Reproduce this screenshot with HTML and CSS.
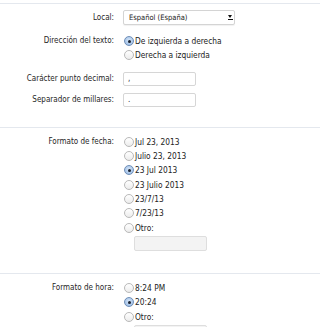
FILE: index.html
```html
<!DOCTYPE html>
<html lang="es">
<head>
<meta charset="utf-8">
<link rel="stylesheet" href="styles.css">
</head>
<body>
<div class="page">
  <section class="section first">
    <div class="row row-local">
      <div class="label">Local:</div>
      <div class="control">
        <div class="select">
          <span>Español (España)</span>
          <span class="arrow"></span>
        </div>
      </div>
    </div>
    <div class="row row-dir">
      <div class="label">Dirección del texto:</div>
      <div class="control radios">
        <label class="opt"><span class="radio on"></span>De izquierda a derecha</label>
        <label class="opt"><span class="radio"></span>Derecha a izquierda</label>
      </div>
    </div>
    <div class="row row-dec">
      <div class="label">Carácter punto decimal:</div>
      <div class="control"><div class="input">,</div></div>
    </div>
    <div class="row row-sep">
      <div class="label">Separador de millares:</div>
      <div class="control"><div class="input">.</div></div>
    </div>
  </section>

  <section class="section date">
    <div class="row">
      <div class="label">Formato de fecha:</div>
      <div class="control radios">
        <label class="opt"><span class="radio"></span>Jul 23, 2013</label>
        <label class="opt"><span class="radio"></span>Julio 23, 2013</label>
        <label class="opt"><span class="radio on"></span>23 Jul 2013</label>
        <label class="opt"><span class="radio"></span>23 Julio 2013</label>
        <label class="opt"><span class="radio"></span>23/7/13</label>
        <label class="opt"><span class="radio"></span>7/23/13</label>
        <label class="opt"><span class="radio"></span>Otro:</label>
        <div class="input other"></div>
      </div>
    </div>
  </section>

  <section class="section time">
    <div class="row">
      <div class="label">Formato de hora:</div>
      <div class="control radios">
        <label class="opt"><span class="radio"></span>8:24 PM</label>
        <label class="opt"><span class="radio on"></span>20:24</label>
        <label class="opt"><span class="radio"></span>Otro:</label>
        <div class="input other"></div>
      </div>
    </div>
  </section>
</div>
</body>
</html>
```

FILE: styles.css
```css
html, body {
  margin: 0;
  padding: 0;
  background: #ffffff;
}
body {
  font-family: "DejaVu Sans Condensed", "DejaVu Sans", Verdana, sans-serif;
  font-size: 8px;
  color: #222;
  overflow: hidden;
}
.page {
  padding-top: 3px;
}
.section {
  border-top: 1px solid #e4e8ee;
}
.section.first {
  padding-top: 6px;
  padding-bottom: 20px;
}
.section.date {
  padding-top: 7px;
  padding-bottom: 22px;
}
.section.time {
  padding-top: 7px;
}
.row {
  display: grid;
  grid-template-columns: 114px 1fr;
  column-gap: 9px;
  align-items: start;
}
.label {
  text-align: right;
  line-height: 14px;
  color: #262626;
}
.row-local .label {
  line-height: 15px;
}
.row-dir {
  margin-top: 9px;
}
.row-dec {
  margin-top: 9px;
}
.row-sep {
  margin-top: 7px;
}
.select {
  height: 13px;
  border: 1px solid #d4d4d4;
  border-radius: 2px;
  background: #fff;
  box-shadow: 0 1px 1px rgba(0,0,0,0.06);
  display: flex;
  align-items: center;
  justify-content: space-between;
  padding-left: 5px;
  padding-right: 2px;
  box-sizing: content-box;
  width: 103px;
  font-size: 7.5px;
}
.arrow {
  width: 3px;
  height: 7px;
  position: relative;
}
.arrow::before {
  content: "";
  position: absolute;
  left: -1px;
  top: 1px;
  border-left: 2.5px solid transparent;
  border-right: 2.5px solid transparent;
  border-top: 3px solid #111;
}
.arrow::after {
  content: "";
  position: absolute;
  left: -1px;
  top: 5px;
  width: 5px;
  height: 1px;
  background: #111;
}
.input {
  height: 12px;
  border: 1px solid #d6d6d6;
  border-radius: 2px;
  background: #fff;
  line-height: 12px;
  padding-left: 4px;
  box-sizing: content-box;
  width: 67px;
  color: #333;
}
.radios {
  display: flex;
  flex-direction: column;
  padding-left: 1px;
}
.opt {
  display: flex;
  align-items: center;
  height: 14.3px;
  color: #222;
  font-size: 8.3px;
}
.time .opt {
  height: 14.5px;
}
.radio {
  width: 8px;
  height: 8px;
  border: 1px solid #b9b9b9;
  border-radius: 50%;
  background: linear-gradient(#ffffff, #ececec);
  margin-right: 1px;
  flex: none;
  display: flex;
  align-items: center;
  justify-content: center;
}
.radio.on {
  border-color: #6f8fb8;
  background: radial-gradient(circle at 50% 40%, #d6e6f8, #8fb3e0);
}
.radio.on::after {
  content: "";
  width: 3px;
  height: 3px;
  border-radius: 50%;
  background: #1a2230;
}
.input.other {
  margin-left: 10px;
  margin-top: 1px;
  background: #f3f3f3;
  border-color: #dedede;
  height: 13px;
}
```
